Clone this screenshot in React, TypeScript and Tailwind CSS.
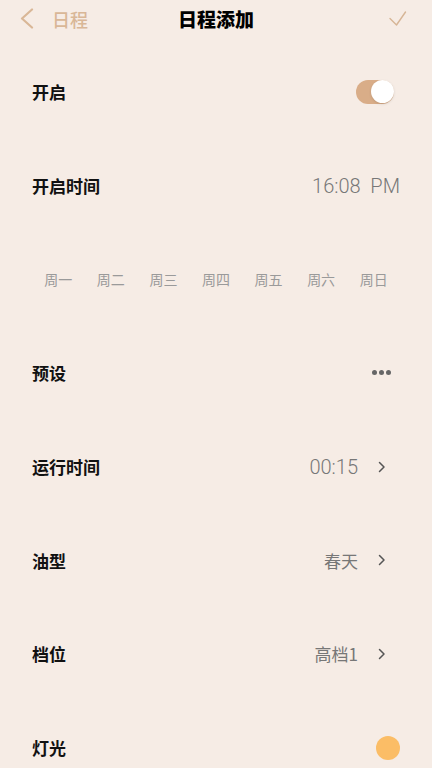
const weekdays = ['周一', '周二', '周三', '周四', '周五', '周六', '周日'];

const cjk = "font-['Noto_Sans_CJK_SC','Noto_Sans',sans-serif]";
const num = "font-['Roboto','Noto_Sans_CJK_SC',sans-serif]";

function Chevron() {
  return (
    <svg width="8" height="12" viewBox="0 0 8 12" className="ml-[20px] shrink-0">
      <path d="M1.5 1.5 L6 6 L1.5 10.5" fill="none" stroke="#555" strokeWidth="1.5" strokeLinecap="round" strokeLinejoin="round" />
    </svg>
  );
}

function Row({ label, children }: { label: string; children?: React.ReactNode }) {
  return (
    <div className="flex h-[93.7px] items-center justify-between pl-8">
      <span className={`${cjk} text-[17px] font-bold text-[#111]`}>{label}</span>
      {children}
    </div>
  );
}

export default function App() {
  return (
    <div className={`min-h-[768px] w-[432px] bg-[#f6ece5] ${cjk} overflow-hidden`}>
      {/* header */}
      <div className="relative flex h-[38px] items-center">
        <div className="flex items-center pl-[19px]">
          <svg width="16" height="22" viewBox="0 0 16 22">
            <path d="M13 1.5 L3 10.5 L13 19.5" fill="none" stroke="#d9b797" strokeWidth="2.2" strokeLinecap="round" strokeLinejoin="round" />
          </svg>
          <span className="ml-[17px] text-[18px] font-medium text-[#d9b797]">日程</span>
        </div>
        <span className="absolute left-1/2 -translate-x-1/2 text-[19px] font-black text-black">日程添加</span>
        <svg width="18" height="16" viewBox="0 0 18 16" className="ml-auto mr-[25px]">
          <path d="M1 7.5 L7.5 14 L16.5 1" fill="none" stroke="#d6b596" strokeWidth="1.4" strokeLinecap="round" strokeLinejoin="round" />
        </svg>
      </div>

      <div className="pt-[7px]">
        <Row label="开启">
          <div className="mr-[38px] flex h-[24px] w-[38px] items-center justify-end rounded-full bg-[#d9ad88]">
            <div className="h-[23px] w-[23px] rounded-full bg-white shadow-sm" />
          </div>
        </Row>

        <Row label="开启时间">
          <span className={`${num} mr-8 whitespace-pre text-[20px] font-light text-[#777]`}>16:08  PM</span>
        </Row>

        <div className="grid h-[93.7px] grid-cols-7 items-center px-8">
          {weekdays.map(d => (
            <span key={d} className="text-center text-[14px] text-[#9a9a9a]">{d}</span>
          ))}
        </div>

        <Row label="预设">
          <div className="mr-[41px] flex gap-[2px]">
            <span className="h-[5px] w-[5px] rounded-full bg-[#666]" />
            <span className="h-[5px] w-[5px] rounded-full bg-[#666]" />
            <span className="h-[5px] w-[5px] rounded-full bg-[#666]" />
          </div>
        </Row>

        <Row label="运行时间">
          <div className="mr-[46px] flex items-center">
            <span className={`${num} text-[20px] font-light text-[#777]`}>00:15</span>
            <Chevron />
          </div>
        </Row>

        <Row label="油型">
          <div className="mr-[46px] flex items-center">
            <span className="text-[17px] text-[#777]">春天</span>
            <Chevron />
          </div>
        </Row>

        <Row label="档位">
          <div className="mr-[46px] flex items-center">
            <span className="text-[17px] text-[#777]">高档1</span>
            <Chevron />
          </div>
        </Row>

        <Row label="灯光">
          <div className="mr-[32px] h-[24px] w-[24px] rounded-full bg-[#fbbd66]" />
        </Row>
      </div>
    </div>
  );
}
